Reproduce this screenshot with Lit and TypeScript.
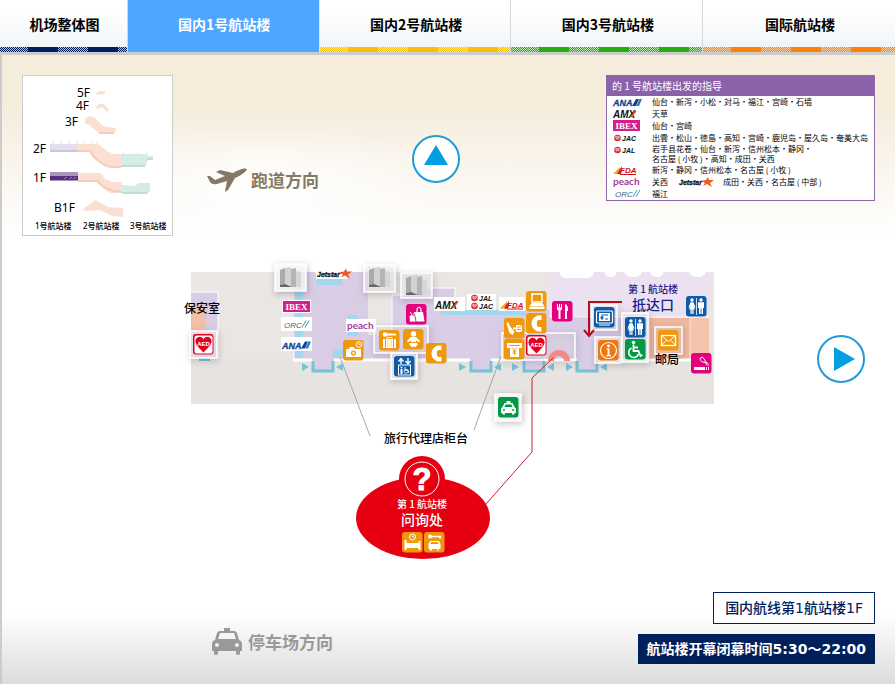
import { LitElement, html, svg, css } from "lit";
import { customElement } from "lit/decorators.js";

const TABS = [
  { label: "机场整体图", tone: "navy" },
  { label: "国内1号航站楼", tone: "current" },
  { label: "国内2号航站楼", tone: "yellow" },
  { label: "国内3号航站楼", tone: "green" },
  { label: "国际航站楼", tone: "orange" },
];

/* Airline marks, each drawn in a 28 x 10 box */
const crane = svg`<circle cx="4.500" cy="5" r="3.300" fill="#d8303a"/>
  <path d="M2.500 3.500 Q3 6 4.500 6 Q6 6 6.500 3.500 M3.500 3 L4.500 4.500 L5.500 3" fill="none" stroke="#fff" stroke-width=".8"/>`;
const LOGOS: Record<string, unknown> = {
  ana: svg`<text class="lg it" x="0" y="9" font-size="9" fill="#13448f" stroke="#13448f" stroke-width=".3">ANA</text>
    <path d="M19 9 L23 2 H26 L23 9Z" fill="#13448f"/><path d="M23.500 9 L26.500 2 H29 L26 9Z" fill="#1c7cc4"/>`,
  amx: svg`<text class="lg it" x="0" y="9" font-size="10" fill="#111">AMX</text>
    <path d="M18 8 L23 2" stroke="#e8502a" stroke-width="1.500"/>`,
  ibex: svg`<rect width="27" height="11" y="-1" fill="#d0208c"/>
    <text class="serif" x="13.500" y="8" text-anchor="middle" font-size="9" fill="#fff">IBEX</text>`,
  jac: svg`${crane}<text class="lg it" x="9" y="8" font-size="7" fill="#111">JAC</text>`,
  jal: svg`${crane}<text class="lg it" x="9" y="8" font-size="7" fill="#111">JAL</text>`,
  fda: svg`<path d="M0 9 L7 2 V9Z" fill="#e8a818"/><path d="M4 9 L9 1 L8 9Z" fill="#d2202a"/>
    <text class="lg it" x="7" y="8" font-size="8" fill="#d2101c">FDA</text><path d="M7 9.500 H23" stroke="#d2101c"/>`,
  peach: svg`<text class="round" x="0" y="8" font-size="10" fill="#a03c98">peach</text>`,
  orc: svg`<text class="thin it" x="2" y="8" font-size="8" fill="#3a5f88">ORC</text>
    <path d="M20 8 L24 1 M23 8 L27 1" stroke="#38a8a0"/>`,
  jetstar: svg`<text class="lg it" x="0" y="8" font-size="7" fill="#111" stroke="#111" stroke-width=".3">Jetstar</text>
    <path d="M29 0 L30 3 L35 3 L31 6 L33 10 L28 7 L24 9 L26 6 L22 4 L27 3Z" fill="#f05a22"/>`,
};
const mark = (id: string, x: number, y: number) => svg`<g transform="translate(${x} ${y})">${LOGOS[id]}</g>`;
const logo = (id: string) => html`<svg class="logo" width=${id === "jetstar" ? 36 : 30} height="12" viewBox=${`0 -1 ${id === "jetstar" ? 36 : 30} 12`} role="img" aria-label=${id.toUpperCase()}>${LOGOS[id]}</svg>`;

const ROUTES = [
  { id: "ana", text: html`仙台・新泻・小松・対马・福江・宫崎・石墙` },
  { id: "amx", text: html`天草` },
  { id: "ibex", text: html`仙台・宫崎` },
  { id: "jac", text: html`出雲・松山・徳島・高知・宫崎・鹿児岛・屋久岛・奄美大岛` },
  { id: "jal", text: html`岩手县花卷・仙台・新泻・信州松本・静冈・<br />名古屋 ( 小牧 )・高知・成田・关西` },
  { id: "fda", text: html`新泻・静冈・信州松本・名古屋 ( 小牧 )` },
  { id: "peach", text: html`<span class="pair"><span>关西</span>${logo("jetstar")}<span>成田・关西・名古屋 ( 中部 )</span></span>` },
  { id: "orc", text: html`福江` },
];

/* Facility pictograms, each drawn in a 21 x 21 tile */
const woman = svg`<circle cx="6" cy="4" r="1.700" fill="#fff"/>
  <path d="M4.500 6.300 H7.500 L9.500 11.500 L8.700 12 L7.500 9.500 L8.800 13.500 H7.500 V18 H6.300 V13.500 H5.700 V18 H4.500 V13.500 H3.200 L4.500 9.500 L3.300 12 L2.500 11.500Z" fill="#fff"/>`;
const man = svg`<circle cx="15" cy="4" r="1.700" fill="#fff"/>
  <path d="M12 6.300 H18 V12 H17 V8.500 V18 H15.400 V12.500 H14.600 V18 H13 V8.500 V12 H12Z" fill="#fff"/>`;
const ORANGE = "#f0980c", PINK = "#e4007f", BLUE = "#0c5ca8", GREEN = "#009944";
const ICONS: Record<string, { bg: string; art: unknown }> = {
  camera: { bg: ORANGE, art: svg`<path d="M3 9 H6 L7 7 H11 L12 9 H18 V17 H3Z" fill="#fff"/><circle cx="10.500" cy="13" r="2.600" fill="${ORANGE}"/><circle cx="10.500" cy="13" r="1.200" fill="#fff"/><circle cx="16" cy="4.500" r="2.800" fill="none" stroke="#fff"/><path d="M16 3 V4.500 H17.500" fill="none" stroke="#fff" stroke-width=".8"/>` },
  luggage: { bg: ORANGE, art: svg`<circle cx="6" cy="4.500" r="2.300" fill="#fff"/><path d="M8 3.500 H17 V5.500 H8Z" fill="#fff"/><rect x="4" y="9" width="13" height="9" fill="#fff"/><path d="M8 9 V7.500 H13 V9" stroke="#fff" fill="none"/><path d="M6.500 9 V18 M14.500 9 V18" stroke="${ORANGE}"/><path d="M9 10 V17 M12 10 V17" stroke="${ORANGE}" stroke-width=".5"/>` },
  baby: { bg: ORANGE, art: svg`<circle cx="10.500" cy="5" r="2.700" fill="#fff"/><path d="M8 8 H13 L17 12 L16 13.500 L13 11.500 V13 H8 V11.500 L5 13.500 L4 12Z" fill="#fff"/><path d="M7 14 H14 L15 15 L12 18.500 L10.500 17 L9 18.500 L6 15Z" fill="#fff"/>` },
  phone: { bg: ORANGE, art: svg`<path d="M11.500 2.500 H15.500 V7 H12 Q9.500 10.500 12 14 H15.500 V18.500 H11.500 C3.500 15.500 3.500 5.500 11.500 2.500Z" fill="#fff"/>` },
  bag: { bg: PINK, art: svg`<path d="M8.500 8 H17 L18.500 17.500 H8Z" fill="#fff"/><path d="M11 10 V5 Q13 1.500 15 5 V10" fill="none" stroke="#fff" stroke-width="1.200"/><path d="M3 11.500 Q6 10 9 11.500 L10 18 H3.500Z" fill="#fff" stroke="${PINK}" stroke-width=".8"/><path d="M5.500 10.500 L4.500 8 M7 10.500 L9 8" stroke="#fff"/>` },
  lift: { bg: BLUE, art: svg`<path d="M7 8 V3 M4.500 5.500 L7 2.500 L9.500 5.500 M14 2 V7 M11.500 5 L14 8 L16.500 5" fill="none" stroke="#fff" stroke-width="1.400"/><rect x="4.500" y="9" width="12" height="10" fill="none" stroke="#fff"/><circle cx="7.500" cy="11.500" r="1" fill="#fff"/><path d="M6.500 13 H8.500 V18 H6.500Z" fill="#fff"/><path d="M11 11 V14 H14 L15 17" stroke="#fff" fill="none"/><circle cx="12" cy="15.500" r="1.800" fill="none" stroke="#fff" stroke-width=".8"/>` },
  computer: { bg: ORANGE, art: svg`<rect x="6" y="3" width="10" height="8" fill="none" stroke="#fff" stroke-width="1.500"/><path d="M6 12 H16 L18.500 15 H3.500Z" fill="#fff"/><rect x="3.500" y="15.500" width="15" height="2.500" fill="#fff"/>` },
  charge: { bg: ORANGE, art: svg`<path d="M2.500 5 L4 4 L6 8 L10.500 14 L8.500 17 L5.500 15Z" fill="#fff"/><path d="M12 7 H16 L18 8 V13 L16 14 H12Z M9 9.500 H12 V11.500 H9Z" fill="#fff"/><path d="M13 9 H17 M13 11.500 H17" stroke="${ORANGE}"/>` },
  atm: { bg: ORANGE, art: svg`<path d="M3 4 H18 V9 H15 V18 H6 V9 H3Z" fill="#fff"/><path d="M5.500 6.500 H15.500 M8 8.500 L10.500 11 L13 8.500 M10.500 11 V16 M8.500 12 H12.500 M8.500 14 H12.500" stroke="${ORANGE}" fill="none"/>` },
  aed: { bg: "#e60020", art: svg`<rect x="1.500" y="1.500" width="18" height="18" rx="2" fill="#fff"/><path d="M10.500 18.500 C5 13 2 10 2.500 6.500 C3.500 2 9 1.500 10.500 5.500 C12 1.500 17.500 2 18.500 6.500 C19 10 16 13 10.500 18.500Z" fill="#e60020"/><text class="lg" x="10.500" y="12" font-size="6" text-anchor="middle" fill="#fff">AED</text>` },
  food: { bg: PINK, art: svg`<path d="M5 3 H6 V6.500 H7 V3 H8 V6.500 H9 V3 H10 V8 Q9.800 9.300 8.500 9.500 V18 H6.500 V9.500 Q5.200 9.300 5 8Z M13 3 Q16.500 4 16 10 H15 V18 H13Z" fill="#fff"/>` },
  screen: { bg: BLUE, art: svg`<rect x="2.500" y="4" width="16" height="12" rx="1" fill="none" stroke="#fff" stroke-width="1.200"/><path d="M5 6 H16 V14 H5Z" fill="#fff"/><path d="M7 8 H14 M7 12 H9 M11 12 H14" stroke="${BLUE}"/><circle cx="8" cy="10.500" r="1.500" fill="${BLUE}"/><path d="M5 18 H16" stroke="#fff"/>` },
  toilet: { bg: BLUE, art: svg`${woman}<path d="M10.500 2 V19" stroke="#fff" stroke-width=".8"/>${man}` },
  wheelchair: { bg: GREEN, art: svg`<circle cx="8.500" cy="3.500" r="1.800" fill="#fff"/><path d="M8.500 5.500 V12 H13.500 L15.500 17 L17.500 16 M8.500 8.500 H13" fill="none" stroke="#fff" stroke-width="1.800"/><path d="M6.500 9 A5 5 0 1 0 13.500 15" fill="none" stroke="#fff" stroke-width="1.600"/>` },
  info: { bg: "#ee7810", art: svg`<circle cx="10.500" cy="10.500" r="8" fill="none" stroke="#fff" stroke-width="1.200"/><circle cx="10.500" cy="6" r="1.400" fill="#fff"/><path d="M8.500 8.500 H11.500 V15 H13 V16.200 H8.300 V15 H9.600 V9.700 H8.500Z" fill="#fff"/>` },
  mail: { bg: ORANGE, art: svg`<rect x="3.500" y="5.500" width="14" height="10" fill="none" stroke="#fff" stroke-width="1.300"/><path d="M4 6 L10.500 11.500 L17 6 M4 15 L8.500 10 M17 15 L12.500 10" fill="none" stroke="#fff"/>` },
  smoke: { bg: PINK, art: svg`<path d="M3 14 H14 V17 H3Z M15 14 H16 V17 H15Z M17 14 H18 V17 H17Z" fill="#fff"/><path d="M17 13 Q18 9.500 14.500 9.500 Q9 9 9 6 Q9.500 3.500 12 4.500 Q14 6 15.500 12" fill="none" stroke="#fff"/>` },
  taxi: { bg: GREEN, art: svg`<path d="M8.500 4 H12.500 V6 H14.500 L16.500 10 L18 11.500 V16 H16.500 V17.500 H14 V16 H7 V17.500 H4.500 V16 H3 V11.500 L4.500 10 L6.500 6 H8.500Z" fill="#fff"/><path d="M7.500 7.500 H13.500 L14.500 10 H6.500Z" fill="${GREEN}"/><circle cx="6" cy="13" r="1" fill="${GREEN}"/><circle cx="15" cy="13" r="1" fill="${GREEN}"/>` },
  hotel: { bg: ORANGE, art: svg`<circle cx="10.500" cy="5" r="3" fill="none" stroke="#fff"/><path d="M10.500 3.500 V5 H12" stroke="#fff" fill="none"/><path d="M2.500 8 H4.500 V11 H16.500 V9 H18.500 V18 H16.500 V16 H4.500 V18 H2.500Z" fill="#fff"/>` },
  rental: { bg: ORANGE, art: svg`<circle cx="6" cy="4.500" r="2" fill="#fff"/><path d="M7 3.800 H17 V6.500 H15 V5.300 H7Z M6 9 H15 L16.500 12 V17 H14.500 V18.500 H13 V17 H8 V18.500 H6 V17 H4.500 V12Z" fill="#fff"/><path d="M7 10 H14 L14.500 12 H6.500Z" fill="${ORANGE}"/>` },
};
const icon = (id: string, x: number, y: number) => svg`<g transform="translate(${x} ${y})">
  <rect width="20.500" height="20.500" rx="3" fill=${ICONS[id].bg}/>${ICONS[id].art}</g>`;
const PLACES: [string, number, number][] = [
  ["aed", 193, 334], ["camera", 343, 340], ["luggage", 379, 330], ["baby", 403, 329], ["phone", 426, 343],
  ["bag", 406, 304], ["lift", 394, 356], ["computer", 526, 291], ["phone", 526, 313], ["charge", 504, 318],
  ["atm", 504, 339], ["aed", 526, 335], ["food", 552, 301], ["screen", 594, 307], ["toilet", 625, 317],
  ["wheelchair", 625, 339], ["info", 598, 340], ["mail", 658, 330], ["toilet", 686, 296], ["smoke", 691, 353],
  ["taxi", 498, 397], ["hotel", 402, 532], ["rental", 424, 532],
];

/* White translucent frames: x, y, width, height, opacity of the fill */
const FRAMES = [
  [190, 331, 27, 27, 0.5], [275, 264, 31, 27, 0.8], [364, 265, 31, 27, 0.5], [401, 273, 31, 25, 0.5],
  [374, 326, 54, 27, 0.3], [391, 353, 26, 26, 0.5], [502, 333, 73, 27, 0.2], [592, 305, 25, 25, 0.3],
  [595, 337, 26, 26, 0.5], [622, 313, 26, 49, 0.5], [655, 327, 27, 27, 0.2], [495, 394, 26, 27, 0.8],
];
const DOORS = [312, 470, 523, 576];
const ENTER_RIGHT = [302, 459, 512, 566];
const ENTER_LEFT = [343, 501, 554, 607];
const LABELS = [
  [282, 300, 29, 13, "ibex"], [281, 317, 31, 14, "orc"], [281, 337, 31, 14, "ana"], [316, 267, 31, 12, "jetstar"],
  [346, 319, 30, 13, "peach"], [434, 297, 31, 14, "amx"], [467, 294, 29, 16, ""], [499, 297, 26, 14, "fda"],
] as const;

const pillars = (x: number, y: number) => svg`<g transform="translate(${x} ${y})">
  <path d="M0 3 L5 1 V17 L0 18Z" fill="#aaa"/><path d="M5 1 L11 0 V19 L5 18Z" fill="#d2d2d2"/>
  <path d="M11 2 L16 1 V20 H11Z" fill="#b4b4b4"/><path d="M16 4 L21 5 V20 H16Z" fill="#d6d6d6"/>
  <path d="M0 18 L5 17 L12 20 H0Z" fill="#666"/></g>`;

@customElement("app-root")
export class AppRoot extends LitElement {
  static styles = css`
    :host {
      display: flex;
      flex-direction: column;
      min-height: 100vh;
      font-family: "Noto Sans CJK SC", sans-serif;
      color: #000;
    }
    * { box-sizing: border-box; }
    a { color: inherit; text-decoration: none; }
    .tabs { display: grid; grid-template-columns: 2fr 3fr 3fr 3fr 3fr; }
    .tab {
      position: relative;
      height: 52px;
      padding: 0 0 4px 2px;
      display: flex;
      align-items: center;
      justify-content: center;
      border-right: 1px solid #d5d8db;
      background: linear-gradient(#fff 20%, #eff2f4);
      font-size: 14px;
      line-height: 20px;
      font-weight: 700;
    }
    .tab:last-child { border-right: 0; }
    .tab::after {
      content: "";
      position: absolute;
      inset: auto 0 0 0;
      height: 5px;
      background:
        repeating-linear-gradient(90deg, transparent 0 28px, var(--tone) 28px 58px, transparent 58px 60px),
        repeating-conic-gradient(var(--tone) 0 25%, var(--pale) 0 50%) 0 0 / 2px 2px;
    }
    .navy { --tone: #001f5c; --pale: #b3bccd; }
    .yellow { --tone: #fdbd0c; --pale: #feeaa8; }
    .green { --tone: #22b00c; --pale: #b5e6ae; }
    .orange { --tone: #ff8208; --pale: #ffcc9c; }
    .current { background: #4da6ff; color: #fff; border-color: #d5e6f5; }
    .current::after { display: none; }
    main {
      flex: 1;
      display: flex;
      flex-direction: column;
      border-top: 3px solid #ccc;
      border-left: 2px solid #ccc;
      padding: 20px;
      background:
        radial-gradient(ellipse 200px 60px at 260px 130px, #fff, transparent),
        linear-gradient(#f5ecdc 0 50px, transparent 180px),
        linear-gradient(0deg, #dcdcdc, transparent 70px),
        #fff;
    }
    .top { display: flex; align-items: flex-start; }
    .floors { width: 151px; border: 1px solid #ccc; background: #fff; }
    .floors svg { display: block; width: 100%; }
    .floors text { font-family: "Noto Sans", "Noto Sans CJK SC", sans-serif; font-size: 12px; }
    .floors .small { font-size: 8px; font-weight: 500; }
    .way { display: flex; align-items: center; gap: 4px; font-size: 17px; line-height: 24px; font-weight: 700; }
    .runway { color: #857963; margin: 92px 0 0 34px; }
    .parking { color: #999; margin: 0 0 8px 190px; gap: 6px; }
    .arrow { width: 48px; height: 48px; padding: 0; border: 0; background: none; }
    .arrow svg { display: block; }
    .north { margin: 60px 0 0 93px; }
    .east { justify-self: end; margin: 73px 10px 0 0; }
    .routes { width: 269px; margin-left: auto; border: 1px solid #8f68aa; background: #fff; }
    .routes h2 { margin: 0; padding: 0 5px; background: #8b62a7; color: #fff; font-size: 10px; line-height: 20px; font-weight: 400; }
    table { border-collapse: collapse; }
    th, td { padding: 0; height: 12px; vertical-align: top; font-weight: 400; font-size: 8px; line-height: 12px; white-space: nowrap; }
    th { width: 45px; padding-left: 6px; text-align: left; }
    .two td { line-height: 10px; height: 20px; }
    .logo { display: block; overflow: visible; }
    .pair { display: flex; }
    .pair .logo { margin: 0 8px 0 11px; }
    .lg { font-family: "Liberation Sans", sans-serif; font-weight: 700; }
    .thin { font-family: "Liberation Sans", sans-serif; }
    .it { font-style: italic; }
    .serif { font-family: "Liberation Serif", serif; font-weight: 700; }
    .round { font-family: Lato, sans-serif; font-weight: 700; }
    .middle { display: grid; grid-template-columns: 1fr minmax(0, 531px) 1fr; align-items: start; margin-top: 26px; }
    .map { display: block; grid-column: 2; width: 100%; overflow: visible; }
    .map .place { font-size: 12px; font-weight: 500; }
    .map .name { font-size: 14px; font-weight: 500; }
    .map .sub { font-size: 10px; font-weight: 500; }
    .shade { filter: drop-shadow(1px 2px 3px rgba(60, 50, 60, 0.35)); }
    .bottom { display: flex; align-items: flex-end; justify-content: space-between; margin-top: auto; padding-top: 20px; }
    .facts { display: flex; flex-direction: column; align-items: flex-end; gap: 10px; font-family: "DejaVu Sans", "Noto Sans CJK SC", sans-serif; font-size: 14px; }
    .fact { margin: 0; padding: 0 11px; border: 1px solid #00205c; line-height: 30px; color: #00205c; background: #fff; font-weight: 500; }
    .hours { padding: 0 8px; line-height: 28px; background: #00205c; color: #fff; font-weight: 700; }
  `;

  private floors() {
    return html`<section class="floors">
      <svg viewBox="0 0 149 159" role="img" aria-label="楼层">
        <g fill="#fbdfd3">
          <path d="M73 17 L76 15 H82 V18 L74 19Z"/>
          <path d="M73 31 Q77 25 82 29 L86 34 L84 36 L79 31 L74 33Z"/>
          <path d="M62 43 L66 40 L71 41 L80 50 L93 52 L92 57 H76 L66 49 L62 47Z"/>
          <path d="M55 68 H75 L88 78 H98 V91 H88 Q80 90 70 80 L67 75 H55Z"/>
          <path d="M55 97 H78 L82 103 L89 106 H99 V117 H88 Q80 113 74 106 H55Z"/>
          <path d="M59 134 L72 124 L85 131 L100 132 V141 L89 140 L77 134 L65 135Z"/>
        </g>
        <path d="M55 75 H67 L70 80 Q80 90 88 91 H98 M55 105 H74 Q84 116 99 116 M76 57 H91" fill="none" stroke="#f8ccb8" stroke-width="2"/>
        <path d="M27 68 H55 V75 H27Z" fill="#e4dff0"/><path d="M27 75 H55" stroke="#cdc3df" stroke-width="2"/>
        <path d="M30 65 V68 M38 65 V68 M46 65 V68 M54 65 V68" stroke="#e4dff0"/>
        <path d="M62 66 V68 M70 66 V68 M74 66 V68" stroke="#fbdfd3"/>
        <path d="M98 78 H124 V80 H130 V84 H125 L122 91 H98Z" fill="#d6ebe4"/>
        <path d="M98 90 H122 M124 83 H130" stroke="#c0ddd5" stroke-width="2"/>
        <path d="M87 76 V79 M100 76 V79 M113 76 V79 M124 76 V79" stroke="#d6ebe4"/>
        <path d="M99 109 L112 110 L116 107 H127 V115 L124 118 H99Z" fill="#d6ebe4"/>
        <path d="M99 117 H124" stroke="#c0ddd5" stroke-width="2"/>
        <path d="M27 96 H55 V105 H27Z" fill="#a993c2"/><path d="M27 100 H55 V104 H27Z" fill="#55307f"/>
        <path d="M41 103 L44 101 M46 103 L49 101 M50 103 L53 101" stroke="#9d86b8"/>
        <text x="54" y="21">5F</text><text x="53" y="34">4F</text><text x="42" y="50">3F</text>
        <text x="10" y="77">2F</text><text x="10" y="106">1F</text><text x="31" y="136">B1F</text>
        <text class="small" x="12" y="153">1号航站楼</text>
        <text class="small" x="60" y="153">2号航站楼</text>
        <text class="small" x="107" y="153">3号航站楼</text>
      </svg>
    </section>`;
  }

  private routes() {
    return html`<section class="routes">
      <h2>的 1 号航站楼出发的指导</h2>
      <table>
        ${ROUTES.map((r) => html`<tr class=${r.id === "jal" ? "two" : ""}><th scope="row">${logo(r.id)}</th><td>${r.text}</td></tr>`)}
      </table>
    </section>`;
  }

  private map() {
    return html`<svg class="map" viewBox="183 262 531 303" role="group" aria-label="国内1号航站楼">
      <path d="M191 272 H714 V404 H191Z" fill="#e9e6e3"/>
      <path d="M191 359 H714 V404 H191Z" fill="#e6e3e0"/>
      <!-- security room -->
      <path d="M191 292 H218 V358 H191Z" fill="#d9cde5"/><path d="M191 292 H218 V358" fill="none" stroke="#fff"/>
      <path d="M191 305 H206 V332 H191Z" fill="#f4bfa6"/><path d="M199 358 H210 V361 H199Z" fill="#74c3d6"/>
      <!-- terminal floor -->
      <path d="M294 272 H368 V335 H392 V295 H418 V288 H455 V310 H549 V272 H649 V360 H294Z" fill="#d9cde6"/>
      <path d="M294 361 V345 M392 335 V295 H418 M420 288 H455 V297" fill="none" stroke="#fff" stroke-width="1"/>
      <path d="M295 290 H303 V358 H295Z M316 276 H342 V285 H316Z M348 315 H358 V336 H348Z M333 349 H343 V358 H333Z M441 310 H526 V315 H441Z" fill="#a3d7ee"/>
      <path d="M549 272 H709 V317 H549Z" fill="#ebe1f0"/>
      <path d="M549 317 H709" stroke="#fff" opacity=".7"/>
      <path d="M559 271 H594 Q593 278 588 278 H565 Q560 278 559 271Z M604 271 H617 Q616 277 611 277 Q605 277 604 271Z M624 271 H642 Q641 277 633 277 Q625 277 624 271Z M650 271 H664 Q663 277 657 277 Q651 277 650 271Z M689 271 H706 Q705 277 697 277 Q690 277 689 271Z" fill="#fff"/>
      <path d="M649 318 H690 V360 H649Z" fill="#efb79f"/><path d="M690 318 H709 V360 H690Z" fill="#f6c3ab"/>
      <path d="M649 318 V360 M690 318 V360" stroke="#fbe8df"/>
      <path d="M293 360 H312 M334 360 H470 M491 360 H523 M544 360 H577 M598 360 H709" stroke="#fff" stroke-width="3"/>
      ${DOORS.map((x) => svg`<path d="M${x + 1} 358 H${x + 21} V370 H${x + 1}Z" fill="#d9cde6"/><path d="M${x + 1} 361 V371 H${x + 21} V361" fill="none" stroke="#74c3d6" stroke-width="3"/>`)}
      ${ENTER_RIGHT.map((x) => svg`<path d="M${x} 363 V371 L${x + 7} 367Z" fill="#74c3d6"/>`)}
      ${ENTER_LEFT.map((x) => svg`<path d="M${x} 363 V371 L${x - 7} 367Z" fill="#74c3d6"/>`)}
      <path d="M340 357 L370 436 M501 356 L474 430" stroke="#aaa6a2"/>
      ${FRAMES.map(([x, y, w, h, o]) => svg`<g class="shade"><rect x=${x} y=${y} width=${w} height=${h} fill="#fff" fill-opacity=${o} stroke="#fff" stroke-width="1.500"/></g>`)}
      ${pillars(280, 267)}${pillars(369, 267)}${pillars(406, 275)}
      ${LABELS.map(([x, y, w, h, id]) => svg`<rect x=${x} y=${y} width=${w} height=${h} fill="#fff"/>${id ? mark(id, x + 1, y + (h - 9) / 2) : ""}`)}
      ${mark("jal", 470, 293)}${mark("jac", 470, 301)}
      <path d="M551 361 A8 8 0 0 1 567 361" fill="none" stroke="#f08c86" stroke-width="6"/>
      <path d="M553 358 L532 378 V452 L486 504" fill="none" stroke="#c8202c"/>
      <path d="M622 302 H589 V334 M584 330 L589 336 L594 330" fill="none" stroke="#b4101c" stroke-width="2"/>
      <!-- information desk call-out -->
      <ellipse cx="423" cy="518" rx="67" ry="41" fill="#e60012"/>
      <circle cx="422" cy="479" r="23" fill="#e60012"/>
      <circle cx="422" cy="479" r="17" fill="none" stroke="#fff"/>
      <text class="lg" x="422" y="490" font-size="31" text-anchor="middle" fill="#fff" stroke="#fff">?</text>
      <text class="sub" x="422" y="508" text-anchor="middle" fill="#fff">第 1 航站楼</text>
      <text class="name" x="422" y="525" text-anchor="middle" fill="#fff">问询处</text>
      ${PLACES.map(([id, x, y]) => icon(id, x, y))}
      <text class="place" x="184" y="313">保安室</text>
      <text class="place" x="384" y="443">旅行代理店柜台</text>
      <text class="place" x="655" y="364">邮局</text>
      <text class="sub" x="653" y="293" text-anchor="middle" fill="#1a1f8c">第 1 航站楼</text>
      <text class="name" x="653" y="310" text-anchor="middle" fill="#1a1f8c">抵达口</text>
    </svg>`;
  }

  render() {
    return html`
      <nav class="tabs">
        ${TABS.map((t) => html`<a class="tab ${t.tone}" href="#">${t.label}</a>`)}
      </nav>
      <main>
        <div class="top">
          ${this.floors()}
          <div class="way runway">
            <svg width="40" height="26" viewBox="0 0 40 26" aria-hidden="true">
              <path d="M0 9 L3 9 L8 13 L18 9 L9 5 L13 3 L26 6 Q36 0 40 2 Q39 6 28 11 L21 23 L18 25 L20 14 L10 17 Q5 18 3 15Z" fill="#857963"/>
            </svg>
            <span>跑道方向</span>
          </div>
          <button class="arrow north" aria-label="上">
            <svg width="48" height="48" viewBox="0 0 48 48"><circle cx="24" cy="24" r="23" fill="#fff" stroke="#1e9bd8" stroke-width="2"/><path d="M24 10 L36 30 H12Z" fill="#009fe3"/></svg>
          </button>
          ${this.routes()}
        </div>
        <div class="middle">
          ${this.map()}
          <button class="arrow east" aria-label="右">
            <svg width="48" height="48" viewBox="0 0 48 48"><circle cx="24" cy="24" r="23" fill="#fff" stroke="#1e9bd8" stroke-width="2"/><path d="M38 24 L17 12 V36Z" fill="#009fe3"/></svg>
          </button>
        </div>
        <div class="bottom">
          <div class="way parking">
            <svg width="30" height="28" viewBox="0 0 30 28" aria-hidden="true">
              <path d="M12 0 H18 V3 H22 Q24 3 25 5 L27 12 Q30 13 30 16 V23 H28 V26 Q26 28 24 26 V23 H6 V26 Q4 28 2 26 V23 H0 V16 Q0 13 3 12 L5 5 Q6 3 8 3 H12Z" fill="#999"/>
              <path d="M8 5 H22 L24 11 H6Z" fill="#f4f4f4"/><circle cx="5" cy="17" r="2" fill="#f0f0f0"/><circle cx="25" cy="17" r="2" fill="#f0f0f0"/>
            </svg>
            <span>停车场方向</span>
          </div>
          <div class="facts">
            <p class="fact">国内航线第1航站楼1F</p>
            <p class="fact hours">航站楼开幕闭幕时间5:30～22:00</p>
          </div>
        </div>
      </main>
    `;
  }
}
